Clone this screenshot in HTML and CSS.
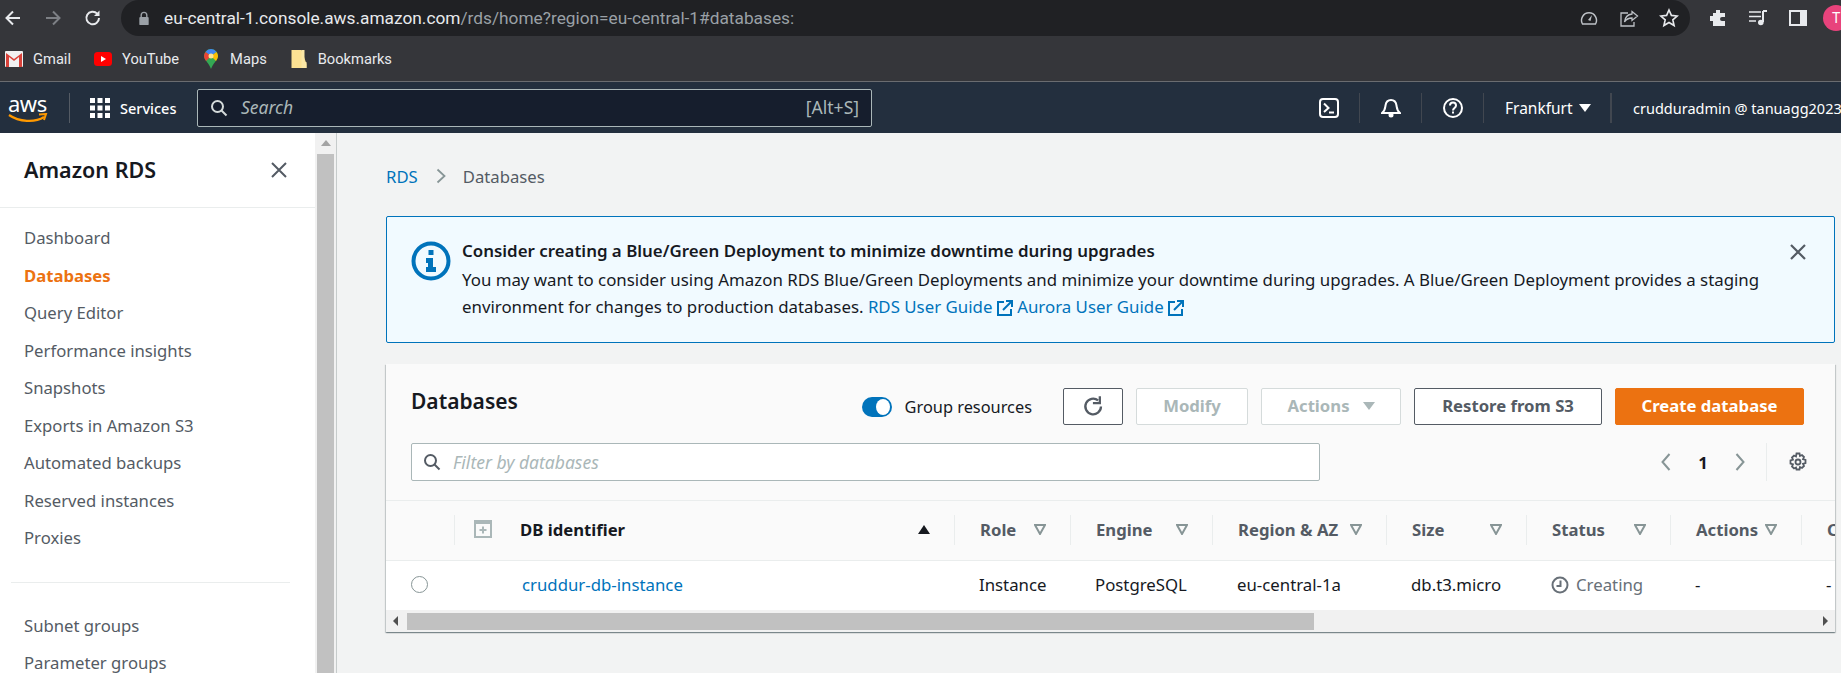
FILE: index.html
```html
<!DOCTYPE html>
<html lang="en">
<head>
  <meta charset="UTF-8" />
  <title>RDS Management Console</title>
  <link rel="stylesheet" href="styles.css">
</head>
<body>

  <div class="toolbar">
    <div class="tool-nav">
      <svg class="tool-icon" viewBox="0 0 20 20"><path d="M17 10H4M10 3.500 3.500 10l6.500 6.500" fill="none" stroke="#e8eaed" stroke-width="2"/></svg>
      <svg class="tool-icon" viewBox="0 0 20 20"><path d="M3 10h13M10 3.500l6.500 6.500-6.500 6.500" fill="none" stroke="#7d8085" stroke-width="2"/></svg>
      <svg class="tool-icon" viewBox="0 0 20 20"><path d="M16 10a6.300 6.300 0 1 1-1.800-4.400" fill="none" stroke="#e8eaed" stroke-width="2"/><path d="M16.500 2.500v5.500H11z" fill="#e8eaed"/></svg>
    </div>
    <div class="address">
      <svg class="lock" viewBox="0 0 12 16"><path d="M3 7V4.500a3 3 0 0 1 6 0V7" fill="none" stroke="#9aa0a6" stroke-width="1.500"/><rect x="1" y="6.500" width="10" height="8.500" rx="1" fill="#9aa0a6"/></svg>
      <span class="url"><span class="url-host">eu-central-1.console.aws.amazon.com</span>/rds/home?region=eu-central-1#databases:</span>
      <svg class="addr-icon" viewBox="0 0 20 20"><path d="M3.500 16a7.500 7.500 0 1 1 13 0z" fill="none" stroke="#bdc1c6" stroke-width="1.500"/><path d="m9 12 4-5-1.500 6z" fill="#bdc1c6"/></svg>
      <svg class="addr-icon" viewBox="0 0 20 20"><path d="M13 3.500 18.500 8 13 12.500V10c-4 0-6 1.500-7.500 4 .5-4.500 3-7.500 7.500-8z" fill="none" stroke="#bdc1c6" stroke-width="1.300"/><path d="M9 5H2v13h13v-4" fill="none" stroke="#bdc1c6" stroke-width="1.300"/></svg>
      <svg class="addr-icon" viewBox="0 0 20 20"><path d="m10 2 2.400 5.400 5.800.6-4.400 3.800 1.300 5.700-5.100-3-5.100 3 1.300-5.700L1.800 8l5.800-.6z" fill="none" stroke="#e8eaed" stroke-width="1.600"/></svg>
    </div>
    <div class="tool-right">
      <svg class="tool-icon" viewBox="0 0 20 20"><path d="M8 2h4v3h5v4h-3a2 2 0 0 0 0 4h3v5H5v-5H2V8h3V5h3z" fill="#e8eaed"/></svg>
      <svg class="tool-icon" viewBox="0 0 20 20"><path d="M1 4h12M1 8.500h12M1 13h7" stroke="#e8eaed" stroke-width="1.600"/><path d="M15 3v11" stroke="#e8eaed" stroke-width="2"/><path d="M15 3h4" stroke="#e8eaed" stroke-width="2"/><circle cx="12.800" cy="14.500" r="2.800" fill="#e8eaed"/></svg>
      <svg class="tool-icon" viewBox="0 0 20 20"><rect x="1" y="2" width="18" height="16" fill="#e8eaed"/><rect x="3" y="4" width="9" height="12" fill="#35363a"/></svg>
      <span class="avatar">T</span>
    </div>
  </div>

  <div class="bookmarks">
    <span class="bookmark">
      <svg class="bm-icon" viewBox="0 0 18 16"><rect width="18" height="16" rx="1" fill="#f1f1f1"/><path d="M1 2v14h3V6l5 4 5-4v10h3V2L9 8z" fill="#d9423a"/></svg>
      Gmail
    </span>
    <span class="bookmark">
      <svg class="bm-icon" viewBox="0 0 18 14"><rect width="18" height="14" rx="3.500" fill="#f00"/><path d="m7 4 5 3-5 3z" fill="#fff"/></svg>
      YouTube
    </span>
    <span class="bookmark">
      <svg class="bm-icon bm-pin" viewBox="0 0 14 20"><path d="M7 0a7 7 0 0 1 7 7c0 4-5 7-7 13-2-6-7-9-7-13a7 7 0 0 1 7-7z" fill="#34a853"/><path d="M1.500 3 7 7l5.500-4A7 7 0 0 0 7 0a7 7 0 0 0-5.500 3z" fill="#4285f4"/><path d="M0 7c0 2 1 3 2 5l5-5-5.500-4A7 7 0 0 0 0 7z" fill="#ea4335"/><path d="M14 7a7 7 0 0 0-1.500-4L7 7l5 5c1-2 2-3 2-5z" fill="#fbbc04"/><circle cx="7" cy="7" r="2.500" fill="#fde293"/></svg>
      Maps
    </span>
    <span class="bookmark">
      <svg class="bm-icon" viewBox="0 0 15 18"><path d="M0 0h10l5 14v4H0z" fill="#fde293"/><path d="M10 0h3v12h2v6h-5z" fill="#fce8a6"/></svg>
      Bookmarks
    </span>
  </div>

  <nav class="topnav">
    <div class="aws-logo">
      <span class="aws-word">aws</span>
      <svg class="aws-smile" viewBox="0 0 40 11"><path d="M1 2c10 7 26 8 35 2" fill="none" stroke="#ff9900" stroke-width="2.200"/><path d="m31 1.500 7-.5-2 6" fill="none" stroke="#ff9900" stroke-width="2"/></svg>
    </div>
    <div class="services">
      <svg class="grid-icon" viewBox="0 0 20 20" fill="#fff">
        <rect width="5" height="5"/><rect x="7.500" width="5" height="5"/><rect x="15" width="5" height="5"/>
        <rect y="7.500" width="5" height="5"/><rect x="7.500" y="7.500" width="5" height="5"/><rect x="15" y="7.500" width="5" height="5"/>
        <rect y="15" width="5" height="5"/><rect x="7.500" y="15" width="5" height="5"/><rect x="15" y="15" width="5" height="5"/>
      </svg>
      Services
    </div>
    <div class="top-search">
      <svg class="search-icon" viewBox="0 0 18 18"><circle cx="7.500" cy="7.500" r="5.500" fill="none" stroke="#d5dbdb" stroke-width="2"/><path d="m11.500 11.500 5 5" stroke="#d5dbdb" stroke-width="2"/></svg>
      <span class="top-search-text">Search</span>
      <span class="top-search-key">[Alt+S]</span>
    </div>
    <div class="nav-right">
      <span class="nav-cell">
        <svg class="nav-icon" viewBox="0 0 20 20"><rect x="1" y="1" width="18" height="18" rx="3" fill="none" stroke="#fff" stroke-width="2"/><path d="m5 5.500 4.500 4.500L5 14" fill="none" stroke="#fff" stroke-width="2"/><path d="M10 14.500h5" stroke="#fff" stroke-width="2"/></svg>
      </span>
      <span class="nav-cell">
        <svg class="nav-icon" viewBox="0 0 20 20"><path d="M1 15c3-2 3-4 3.500-7.500C5 4 7 2 10 2s5 2 5.500 5.500c.5 3.500.5 5.500 3.500 7.500z" fill="none" stroke="#fff" stroke-width="2"/><circle cx="10" cy="17" r="2.500" fill="#fff"/></svg>
      </span>
      <span class="nav-cell">
        <svg class="nav-icon" viewBox="0 0 20 20"><circle cx="10" cy="10" r="9" fill="none" stroke="#fff" stroke-width="2"/><path d="M7 7.500c0-4 6-4 6 0 0 2.500-3 2.500-3 5" fill="none" stroke="#fff" stroke-width="2"/><rect x="9" y="13.500" width="2" height="2" fill="#fff"/></svg>
      </span>
      <span class="nav-region">Frankfurt <i class="caret"></i></span>
      <span class="nav-user">crudduradmin @ tanuagg2023</span>
    </div>
  </nav>

  <div class="page">
    <aside class="sidebar">
      <div class="side-head">
        <h2>Amazon RDS</h2>
        <svg class="side-close" viewBox="0 0 18 18"><path d="m2 2 14 14M16 2 2 16" stroke="#545b64" stroke-width="2"/></svg>
      </div>
      <ul class="side-list">
        <li>Dashboard</li>
        <li class="active">Databases</li>
        <li>Query Editor</li>
        <li>Performance insights</li>
        <li>Snapshots</li>
        <li>Exports in Amazon S3</li>
        <li>Automated backups</li>
        <li>Reserved instances</li>
        <li>Proxies</li>
      </ul>
      <div class="side-divider"></div>
      <ul class="side-list">
        <li>Subnet groups</li>
        <li>Parameter groups</li>
      </ul>
    </aside>
    <div class="side-scroll">
      <i class="arrow-up"></i>
      <div class="side-thumb"></div>
    </div>

    <main class="content">
      <div class="crumbs">
        <a href="#">RDS</a>
        <svg class="crumb-sep" viewBox="0 0 10 16"><path d="m1.500 1.500 7 6.500-7 6.500" fill="none" stroke="#879596" stroke-width="1.800"/></svg>
        <span>Databases</span>
      </div>

      <div class="alert">
        <svg class="alert-icon" viewBox="0 0 40 40"><circle cx="20" cy="20" r="17.500" fill="none" stroke="#0073bb" stroke-width="4"/><rect x="17.500" y="9" width="5" height="5" fill="#0073bb"/><path d="M15 17h7v9h3v5H15v-5h2v-4h-2z" fill="#0073bb"/></svg>
        <div class="alert-body">
          <div class="alert-title">Consider creating a Blue/Green Deployment to minimize downtime during upgrades</div>
          <div class="alert-text">You may want to consider using Amazon RDS Blue/Green Deployments and minimize your downtime during upgrades. A Blue/Green Deployment provides a staging environment for changes to production databases. <a href="#">RDS User Guide <svg class="ext" viewBox="0 0 16 16"><path d="M7 2H1v13h13V9" fill="none" stroke="#0073bb" stroke-width="2"/><path d="M6 10 14 2M9 1h6v6" fill="none" stroke="#0073bb" stroke-width="2"/></svg></a> <a href="#">Aurora User Guide <svg class="ext" viewBox="0 0 16 16"><path d="M7 2H1v13h13V9" fill="none" stroke="#0073bb" stroke-width="2"/><path d="M6 10 14 2M9 1h6v6" fill="none" stroke="#0073bb" stroke-width="2"/></svg></a></div>
        </div>
        <svg class="alert-close" viewBox="0 0 18 18"><path d="m2 2 14 14M16 2 2 16" stroke="#545b64" stroke-width="2.200"/></svg>
      </div>

      <section class="card">
        <div class="card-head">
          <h1>Databases</h1>
          <div class="card-actions">
            <span class="toggle"><i></i></span>
            <span class="toggle-label">Group resources</span>
            <button class="btn btn-icon">
              <svg viewBox="0 0 20 20"><path d="M16.500 10a6.800 6.800 0 1 1-2.500-5.300" fill="none" stroke="#545b64" stroke-width="2"/><path d="M15.500 1v6h-6" fill="none" stroke="#545b64" stroke-width="2"/></svg>
            </button>
            <button class="btn btn-off btn-modify">Modify</button>
            <button class="btn btn-off btn-actions">Actions <i class="caret caret-off"></i></button>
            <button class="btn btn-restore">Restore from S3</button>
            <button class="btn btn-primary">Create database</button>
          </div>
        </div>

        <div class="filter-row">
          <div class="filter">
            <svg class="filter-icon" viewBox="0 0 18 18"><circle cx="7.500" cy="7.500" r="5.500" fill="none" stroke="#545b64" stroke-width="2"/><path d="m11.500 11.500 5 5" stroke="#545b64" stroke-width="2"/></svg>
            <span>Filter by databases</span>
          </div>
          <div class="pager">
            <svg class="pager-arrow" viewBox="0 0 10 18"><path d="M8.500 1 1.500 9l7 8" fill="none" stroke="#879596" stroke-width="2"/></svg>
            <span class="pager-num">1</span>
            <svg class="pager-arrow" viewBox="0 0 10 18"><path d="m1.500 1 7 8-7 8" fill="none" stroke="#879596" stroke-width="2"/></svg>
            <span class="pager-gear">
              <svg viewBox="0 0 20 20"><path d="M8.500 1.500h3l.5 2.500 2-1 2 2-1 2.200 2.500.8v3l-2.500.8 1 2.200-2 2-2-1-.5 2.500h-3L8 15.500l-2 1-2-2 1-2.200L2.500 11.500v-3L5 7.700 4 5.500l2-2 2 1z" fill="none" stroke="#545b64" stroke-width="1.800"/><circle cx="10" cy="10" r="2.500" fill="none" stroke="#545b64" stroke-width="1.800"/></svg>
            </span>
          </div>
        </div>

        <div class="table-wrap">
          <table class="db-table">
            <colgroup>
              <col class="c-radio"><col class="c-id"><col class="c-role"><col class="c-engine"><col class="c-region"><col class="c-size"><col class="c-status"><col class="c-actions"><col class="c-cpu">
            </colgroup>
            <thead>
              <tr>
                <th></th>
                <th>
                  <div class="th-in th-id">
                    <svg class="expand" viewBox="0 0 18 18"><rect x="1" y="1" width="16" height="16" fill="none" stroke="#aab7b8" stroke-width="2"/><rect x="1" y="1" width="16" height="3" fill="#aab7b8"/><path d="M9 6.500v7M5.500 10h7" stroke="#aab7b8" stroke-width="2"/></svg>
                    <span class="th-main">DB identifier</span>
                    <i class="sort-up"></i>
                  </div>
                </th>
                <th><div class="th-in">Role <svg class="funnel" viewBox="0 0 12 11"><path d="M1 1h10L6 10z" fill="none" stroke="#879596" stroke-width="2"/></svg></div></th>
                <th><div class="th-in">Engine <svg class="funnel" viewBox="0 0 12 11"><path d="M1 1h10L6 10z" fill="none" stroke="#879596" stroke-width="2"/></svg></div></th>
                <th><div class="th-in">Region &amp; AZ <svg class="funnel" viewBox="0 0 12 11"><path d="M1 1h10L6 10z" fill="none" stroke="#879596" stroke-width="2"/></svg></div></th>
                <th><div class="th-in">Size <svg class="funnel" viewBox="0 0 12 11"><path d="M1 1h10L6 10z" fill="none" stroke="#879596" stroke-width="2"/></svg></div></th>
                <th><div class="th-in">Status <svg class="funnel" viewBox="0 0 12 11"><path d="M1 1h10L6 10z" fill="none" stroke="#879596" stroke-width="2"/></svg></div></th>
                <th><div class="th-in">Actions <svg class="funnel" viewBox="0 0 12 11"><path d="M1 1h10L6 10z" fill="none" stroke="#879596" stroke-width="2"/></svg></div></th>
                <th><div class="th-in">CPU</div></th>
              </tr>
            </thead>
            <tbody>
              <tr>
                <td class="td-radio"><i class="radio"></i></td>
                <td class="td-id"><a href="#">cruddur-db-instance</a></td>
                <td>Instance</td>
                <td>PostgreSQL</td>
                <td>eu-central-1a</td>
                <td>db.t3.micro</td>
                <td class="td-status"><svg class="clock" viewBox="0 0 18 18"><circle cx="9" cy="9" r="7.500" fill="none" stroke="#687078" stroke-width="2"/><path d="M9.500 4.500V10H5.500" fill="none" stroke="#687078" stroke-width="2"/></svg>Creating</td>
                <td>-</td>
                <td>-</td>
              </tr>
            </tbody>
          </table>
        </div>

        <div class="hscroll">
          <i class="arrow-left"></i>
          <div class="hscroll-thumb"></div>
          <i class="arrow-right"></i>
        </div>
      </section>
    </main>
  </div>

</body>
</html>
```

FILE: styles.css
```css
* { box-sizing: border-box; margin: 0; padding: 0; }

html, body {
  height: 100%;
  overflow: hidden;
}

body {
  font-family: 'Noto Sans', sans-serif;
  font-size: 16.700px;
  background-color: #f2f3f3;
  color: #16191f;
  display: flex;
  flex-direction: column;
}

a { color: #0073bb; text-decoration: none; }
ul { list-style: none; }
i { display: block; }

/* browser chrome */
.toolbar {
  height: 36px;
  background-color: #35363a;
  display: flex;
  align-items: center;
  flex: none;
}

.tool-nav {
  width: 121px;
  display: flex;
  align-items: center;
  gap: 20px;
  padding-left: 3px;
  flex: none;
}

.tool-icon { width: 20px; height: 20px; flex: none; }

.address {
  width: 1569px;
  height: 36px;
  background-color: #202124;
  border-radius: 18px;
  display: flex;
  align-items: center;
  padding-left: 17px;
  padding-right: 11px;
  flex: none;
}

.lock { width: 12px; height: 15px; flex: none; }

.url {
  font-family: 'Roboto', sans-serif;
  font-size: 17.300px;
  color: #9aa0a6;
  margin-left: 14px;
  flex: 1;
  white-space: nowrap;
}

.url-host { color: #e8eaed; }

.addr-icon { width: 20px; height: 20px; margin-left: 20px; flex: none; }

.tool-right {
  display: flex;
  align-items: center;
  gap: 20px;
  padding-left: 18px;
  flex: none;
}

.avatar {
  width: 26px;
  height: 26px;
  border-radius: 50%;
  background-color: #e8437c;
  color: #fff;
  font-family: 'Roboto', sans-serif;
  font-size: 14px;
  line-height: 26px;
  padding-left: 9px;
  flex: none;
  margin-left: -5px;
}

.bookmarks {
  height: 46px;
  background-color: #35363a;
  border-bottom: 1px solid #6a6c70;
  display: flex;
  align-items: center;
  padding-left: 5px;
  font-family: 'Roboto', sans-serif;
  font-size: 14.700px;
  color: #e8eaed;
  flex: none;
}

.bookmark {
  display: flex;
  align-items: center;
  gap: 10px;
  margin-right: 23px;
}

.bm-icon { width: 18px; height: 18px; flex: none; }
.bm-pin { height: 20px; }

/* aws top nav */
.topnav {
  height: 51px;
  background-color: #232f3e;
  display: flex;
  align-items: center;
  color: #fff;
  font-size: 14.500px;
  flex: none;
}

.aws-logo {
  width: 70px;
  height: 30px;
  padding-left: 8px;
  border-right: 1px solid #545b64;
  flex: none;
}

.aws-word {
  display: block;
  font-size: 22px;
  line-height: 20px;
  letter-spacing: -0.5px;
}

.aws-smile { display: block; width: 40px; height: 11px; }

.services {
  width: 127px;
  display: flex;
  align-items: center;
  gap: 10px;
  padding-left: 20px;
  font-weight: 500;
  flex: none;
}

.grid-icon { width: 20px; height: 20px; flex: none; }

.top-search {
  width: 675px;
  height: 38px;
  background-color: #161e2d;
  border: 1px solid #aab7b8;
  border-radius: 2px;
  display: flex;
  align-items: center;
  padding: 0 12px 2px;
  flex: none;
}

.search-icon { width: 18px; height: 18px; flex: none; margin-top: 2px; }

.top-search-text {
  font-style: italic;
  color: #aab7b8;
  margin-left: 13px;
  flex: 1;
  font-size: 17.500px;
}

.top-search-key { color: #aab7b8; font-size: 17.500px; }

.nav-right {
  display: flex;
  align-items: center;
  margin-left: 426px;
  flex: none;
  white-space: nowrap;
}

.nav-cell {
  width: 62px;
  height: 30px;
  border-right: 1px solid #414750;
  display: flex;
  align-items: center;
  justify-content: center;
  flex: none;
}

.nav-icon { width: 20px; height: 20px; }

.nav-region {
  width: 128px;
  height: 30px;
  padding-left: 21px;
  font-size: 15.500px;
  border-right: 2px solid #414750;
  display: flex;
  align-items: center;
  gap: 6px;
  flex: none;
}

.caret {
  width: 0;
  height: 0;
  border-left: 6px solid transparent;
  border-right: 6px solid transparent;
  border-top: 8px solid #fff;
}

.caret-off { border-top-color: #aab7b8; margin-left: 13px; }

.nav-user { padding-left: 21px; }

/* page */
.page {
  flex: 1;
  display: flex;
  min-height: 0;
  overflow: hidden;
}

.sidebar {
  width: 315px;
  background-color: #fff;
  flex: none;
  color: #545b64;
  overflow: hidden;
}

.side-head {
  height: 75px;
  border-bottom: 1px solid #eaeded;
  display: flex;
  align-items: center;
  justify-content: space-between;
  padding: 0 27px 0 24px;
}

.side-head h2 {
  font-size: 21.500px;
  font-weight: 600;
  color: #16191f;
  margin-top: -1px;
}

.side-close { width: 18px; height: 18px; }

.side-list { padding-top: 12px; }

.side-list li {
  height: 37.500px;
  line-height: 36px;
  padding-left: 24px;
  white-space: nowrap;
}

.side-list li.active { color: #ec7211; font-weight: 700; }

.side-divider {
  height: 1px;
  background-color: #eaeded;
  margin: 24px 25px 13px 11px;
}

.side-scroll {
  width: 22px;
  flex: none;
  background-color: #f1f1f1;
  border-right: 1px solid #c6cbcb;
  padding-left: 2px;
  display: flex;
  flex-direction: column;
}

.arrow-up {
  width: 0;
  height: 0;
  margin: 7px 0 0 4px;
  border-left: 5px solid transparent;
  border-right: 5px solid transparent;
  border-bottom: 6px solid #a3a3a3;
  flex: none;
}

.side-thumb {
  width: 17px;
  flex: 1;
  background-color: #c1c1c1;
  margin-top: 8px;
}

.content {
  flex: 1;
  min-width: 0;
  padding: 0 6px 0 49px;
}

.crumbs {
  height: 83px;
  padding-top: 3px;
  display: flex;
  align-items: center;
  gap: 14px;
  color: #545b64;
}

.crumb-sep { width: 10px; height: 16px; margin-left: 4px; margin-right: 3px; }

.alert {
  height: 127px;
  background-color: #f1faff;
  border: 1px solid #0073bb;
  border-radius: 2px;
  display: flex;
  padding: 24px 27px 0 24px;
}

.alert-icon { width: 40px; height: 40px; flex: none; }

.alert-body {
  flex: 1;
  margin-left: 11px;
  font-size: 16.850px;
  line-height: 27px;
}

.alert-title { font-size: 16.900px; font-weight: 600; margin-top: -4px; margin-bottom: 2px; }

.alert-close { width: 18px; height: 18px; margin-top: 2px; margin-left: 20px; flex: none; }

.ext { width: 16px; height: 16px; vertical-align: -3px; }

.card {
  margin-top: 21px;
  background-color: #fafafa;
  box-shadow: 0 1px 1px rgba(0, 28, 36, 0.3), 1px 1px 1px rgba(0, 28, 36, 0.15), -1px 1px 1px rgba(0, 28, 36, 0.15);
}

.card-head {
  height: 79px;
  display: flex;
  align-items: flex-start;
  justify-content: space-between;
  padding: 23px 31px 0 25px;
}

.card-head h1 { font-size: 21px; font-weight: 600; }

.card-actions {
  display: flex;
  align-items: center;
  margin-top: 1px;
}

.toggle {
  width: 30px;
  height: 20px;
  border-radius: 10px;
  background-color: #0073bb;
  padding: 2px 2px 2px 14px;
}

.toggle i {
  width: 14px;
  height: 16px;
  border-radius: 50%;
  background-color: #fff;
}

.toggle-label {
  font-size: 16.350px;
  margin-left: 13px;
  margin-right: 31px;
  white-space: nowrap;
}

.btn {
  height: 37px;
  border-radius: 2px;
  padding-bottom: 2px;
  font-family: 'Noto Sans', sans-serif;
  font-size: 16.700px;
  font-weight: 700;
  background-color: #fff;
  display: flex;
  align-items: center;
  justify-content: center;
  margin-right: 13px;
}

.btn-icon { width: 60px; padding-bottom: 0; border: 1px solid #545b64; }
.btn-icon svg { width: 23px; height: 23px; }

.btn-off { background-color: #fff; border: 1px solid #d5dbdb; color: #aab7b8; }
.btn-modify { width: 112px; }
.btn-actions { width: 140px; }

.btn-restore { width: 188px; border: 1px solid #545b64; color: #545b64; }

.btn-primary {
  width: 189px;
  background-color: #ec7211;
  border: 1px solid #ec7211;
  color: #fff;
  margin-right: 0;
}

.filter-row {
  height: 57px;
  display: flex;
  justify-content: space-between;
  padding: 0 0 0 25px;
}

.filter {
  width: 909px;
  height: 38px;
  background-color: #fff;
  border: 1px solid #aab7b8;
  border-radius: 2px;
  display: flex;
  align-items: center;
  padding-left: 11px;
  font-style: italic;
  font-size: 17.500px;
  color: #aab7b8;
  gap: 12px;
}

.filter-icon { width: 18px; height: 18px; flex: none; }

.pager {
  display: flex;
  align-items: center;
  height: 38px;
  padding-right: 27px;
}

.pager-arrow { width: 10px; height: 18px; flex: none; }

.pager-num {
  width: 64px;
  text-align: center;
  font-weight: 700;
  margin-right: 0;
}

.pager-gear {
  margin-left: 21px;
  padding-left: 21px;
  border-left: 1px solid #eaeded;
  height: 38px;
  display: flex;
  align-items: center;
}

.pager-gear svg { width: 20px; height: 20px; }

.table-wrap {
  overflow: hidden;
  border-top: 1px solid #eaeded;
}

.db-table {
  width: 1555px;
  table-layout: fixed;
  border-collapse: collapse;
  font-size: 16.800px;
}

.c-radio { width: 68px; }
.c-id { width: 500px; }
.c-role { width: 116px; }
.c-engine { width: 142px; }
.c-region { width: 174px; }
.c-size { width: 140px; }
.c-status { width: 144px; }
.c-actions { width: 131px; }
.c-cpu { width: 140px; }

.db-table th {
  height: 59px;
  border-bottom: 1px solid #eaeded;
  font-size: 16.700px;
  font-weight: 700;
  color: #545b64;
  text-align: left;
  white-space: nowrap;
}

.th-in {
  height: 30px;
  border-left: 1px solid #eaeded;
  display: flex;
  align-items: center;
  justify-content: space-between;
  padding: 0 24px 2px 25px;
}

.th-id { padding: 0 24px 2px 19px; }

.th-main { color: #16191f; flex: 1; margin-left: 28px; }

.expand { width: 18px; height: 18px; flex: none; }

.funnel { width: 12px; height: 11px; flex: none; }

.sort-up {
  width: 0;
  height: 0;
  border-left: 6px solid transparent;
  border-right: 6px solid transparent;
  border-bottom: 9px solid #16191f;
}

.db-table td {
  height: 50px;
  background-color: #fff;
  padding: 0 0 2px 25px;
  white-space: nowrap;
}

.db-table .td-id { padding-left: 68px; }

.radio {
  width: 17px;
  height: 17px;
  border: 1px solid #879596;
  border-radius: 50%;
  background-color: #fff;
  margin-top: 1px;
}

.td-status { color: #687078; }

.clock { width: 18px; height: 18px; vertical-align: -3px; margin-right: 7px; }

.hscroll {
  height: 22px;
  background-color: #f1f1f1;
  display: flex;
  align-items: center;
  padding: 0 7px 0 7px;
}

.arrow-left {
  width: 0;
  height: 0;
  border-top: 5px solid transparent;
  border-bottom: 5px solid transparent;
  border-right: 5px solid #505050;
}

.hscroll-thumb {
  width: 907px;
  height: 17px;
  background-color: #c1c1c1;
  margin-left: 9px;
  margin-right: auto;
}

.arrow-right {
  width: 0;
  height: 0;
  border-top: 5px solid transparent;
  border-bottom: 5px solid transparent;
  border-left: 5px solid #505050;
}
```
